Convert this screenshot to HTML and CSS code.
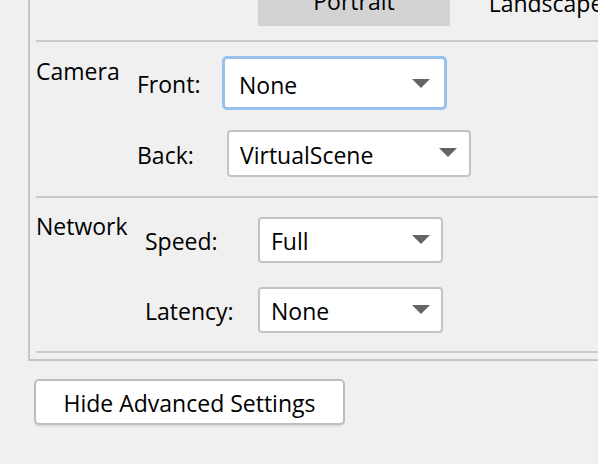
FILE: index.html
```html
<!DOCTYPE html>
<html lang="en">

<head>
  <meta charset="UTF-8">
  <meta name="viewport" content="width=device-width, initial-scale=1.0">
  <title>Advanced Settings</title>
  <link rel="stylesheet" href="styles.css">
</head>

<body>
  <div class="panel">
    <div class="tabs">
      <div class="tab selected">Portrait</div>
      <div class="tab">Landscape</div>
    </div>
    <div class="rule first"></div>

    <div class="group camera">
      <div class="group-label">Camera</div>
      <div class="fields">
        <label class="field-label">Front:</label>
        <div class="combo focused"><span>None</span><i class="arrow"></i></div>
        <label class="field-label">Back:</label>
        <div class="combo back"><span>VirtualScene</span><i class="arrow"></i></div>
      </div>
    </div>
    <div class="rule"></div>

    <div class="group network">
      <div class="group-label">Network</div>
      <div class="fields">
        <label class="field-label">Speed:</label>
        <div class="combo"><span>Full</span><i class="arrow"></i></div>
        <label class="field-label">Latency:</label>
        <div class="combo"><span>None</span><i class="arrow"></i></div>
      </div>
    </div>
    <div class="rule"></div>
  </div>

  <button class="toggle">Hide Advanced Settings</button>
</body>

</html>
```

FILE: styles.css
```css
* {
  margin: 0;
  padding: 0;
  box-sizing: border-box;
}

html,
body {
  width: 598px;
  height: 464px;
  overflow: hidden;
}

body {
  background-color: #f0f0f0;
  color: #000;
  font-family: "Open Sans", "Noto Sans", sans-serif;
  font-size: 23px;
  line-height: 32px;
}

.panel {
  margin-left: 28px;
  width: 570px;
  padding: 0 0 6px 6px;
  border-left: 2px solid #c4c4c4;
  border-bottom: 2px solid #c4c4c4;
  overflow: hidden;
}

/* tab strip, scrolled partly out of view */
.tabs {
  display: flex;
  margin: -24px 0 0 222px;
  width: 500px;
}

.tab {
  width: 192px;
  height: 50px;
  flex-shrink: 0;
  display: flex;
  align-items: center;
  justify-content: center;
  padding-top: 3px;
}

.tab.selected {
  background-color: #d3d3d3;
  padding-top: 0;
}

.rule {
  height: 2px;
  background-color: #cacaca;
}

.rule.first {
  margin-top: 14px;
}

.group {
  display: flex;
}

.camera {
  padding: 14px 0 19px;
}

.network {
  padding: 19px 0 18px;
}

.group-label {
  flex-shrink: 0;
}

.camera .group-label {
  width: 101px;
  margin-top: -1px;
}

.network .group-label {
  width: 109px;
  margin-top: -7px;
}

.fields {
  display: grid;
  align-items: center;
}

.camera .fields {
  grid-template-columns: 85px auto;
  row-gap: 20px;
}

.network .fields {
  grid-template-columns: 113px auto;
  row-gap: 24px;
}

.field-label {
  padding-top: 2px;
}

.combo {
  display: flex;
  align-items: center;
  justify-content: space-between;
  width: 185px;
  height: 46px;
  padding: 2px 11px 0 11px;
  background-color: #fff;
  border: 2px solid #c3c3c3;
  border-radius: 4px;
}

.combo.back {
  width: 244px;
  height: 47px;
  margin-left: 5px;
  padding-right: 12px;
}

.combo.focused {
  width: 225px;
  height: 54px;
  padding: 4px 14px 0 14px;
  border: 3px solid #99c1ed;
  border-radius: 5px;
}

.arrow {
  width: 0;
  height: 0;
  margin-top: -4px;
  border-left: 9px solid transparent;
  border-right: 9px solid transparent;
  border-top: 9px solid #646464;
}

.toggle {
  display: flex;
  align-items: center;
  justify-content: center;
  margin: 18px 0 0 34px;
  width: 311px;
  height: 46px;
  padding-top: 2px;
  background-color: #fff;
  border: 2px solid #bdbdbd;
  border-radius: 5px;
  box-shadow: 0 2px 1px rgba(0, 0, 0, 0.07);
  font: inherit;
  color: #000;
}
```
